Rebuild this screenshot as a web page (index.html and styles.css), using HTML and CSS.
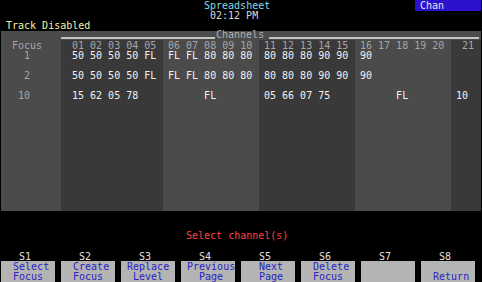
FILE: index.html
```html
<!DOCTYPE html>
<html lang="en">
<head>
    <meta charset="UTF-8">
    <title>Spreadsheet</title>
    <link rel="stylesheet" href="styles.css">
</head>
<body>
    <div class="screen">

        <!-- Top status lines -->
        <div class="line">
            <span class="title">Spreadsheet</span>
            <span class="mode">Chan</span>
        </div>
        <div class="line"><span class="clock">02:12 PM</span></div>
        <div class="line"><span class="status">Track Disabled</span></div>

        <!-- Channel sheet -->
        <div class="sheet">
            <div class="sheet-head"><span class="sheet-title">Channels</span></div>
            <div class="sheet-body">
                <div class="col focus-col">
                    <div class="cell head">Focus</div>
                    <div class="cell head">  1</div>
                    <div class="cell head skip">  2</div>
                    <div class="cell head skip"> 10</div>
                </div>
                <div class="col band dark g1">
                    <div class="cell head">01 02 03 04 05</div>
                    <div class="cell">50 50 50 50 FL</div>
                    <div class="cell skip">50 50 50 50 FL</div>
                    <div class="cell skip">15 62 05 78</div>
                </div>
                <div class="col band g2">
                    <div class="cell head">06 07 08 09 10</div>
                    <div class="cell">FL FL 80 80 80</div>
                    <div class="cell skip">FL FL 80 80 80</div>
                    <div class="cell skip">      FL</div>
                </div>
                <div class="col band dark g3">
                    <div class="cell head">11 12 13 14 15</div>
                    <div class="cell">80 80 80 90 90</div>
                    <div class="cell skip">80 80 80 90 90</div>
                    <div class="cell skip">05 66 07 75</div>
                </div>
                <div class="col band g4">
                    <div class="cell head">16 17 18 19 20</div>
                    <div class="cell">90</div>
                    <div class="cell skip">90</div>
                    <div class="cell skip">      FL</div>
                </div>
                <div class="col band dark g5">
                    <div class="cell head"> 21</div>
                    <div class="cell"></div>
                    <div class="cell skip"></div>
                    <div class="cell skip">10</div>
                </div>
            </div>
        </div>

        <div class="message">Select channel(s)</div>

        <!-- Soft keys -->
        <div class="softkeys">
            <div class="key"><div class="key-label">   S1</div><div class="key-face">  Select
  Focus</div></div>
            <div class="key"><div class="key-label">   S2</div><div class="key-face">  Create
  Focus</div></div>
            <div class="key"><div class="key-label">   S3</div><div class="key-face"> Replace
  Level</div></div>
            <div class="key"><div class="key-label">   S4</div><div class="key-face"> Previous
   Page</div></div>
            <div class="key"><div class="key-label">   S5</div><div class="key-face">   Next
   Page</div></div>
            <div class="key"><div class="key-label">   S6</div><div class="key-face">  Delete
  Focus</div></div>
            <div class="key"><div class="key-label">   S7</div><div class="key-face"></div></div>
            <div class="key"><div class="key-label">   S8</div><div class="key-face">
  Return</div></div>
        </div>
    </div>
</body>
</html>
```

FILE: styles.css
```css
* {
    margin: 0;
    padding: 0;
    box-sizing: border-box;
}

body {
    background: #000;
    color: #f2f2f2;
    font-family: "DejaVu Sans Mono", monospace;
    font-size: 10px;
    line-height: 10px;
}

.screen {
    width: 482px;
    height: 282px;
    padding-top: 1px;
    display: flex;
    flex-direction: column;
    overflow: hidden;
}

/* Top lines */
.line {
    height: 10px;
    display: flex;
    white-space: pre;
}

.title {
    margin-left: 204px;
    color: #86dce4;
}

.mode {
    margin-left: auto;
    margin-right: 1px;
    margin-top: -1px;
    width: 66px;
    height: 11px;
    padding: 1px 0 0 5px;
    background: #2c12cc;
    color: #e4e4ff;
}

.clock {
    margin-left: 210px;
    color: #d8d8d8;
}

.status {
    margin-left: 6px;
    color: #f4f4a8;
}

/* Sheet */
.sheet {
    margin-left: 1px;
    width: 480px;
    height: 180px;
    background: #4b4b4b;
    display: flex;
    flex-direction: column;
}

.sheet-head {
    height: 9px;
    display: flex;
    padding-left: 60px;
    padding-right: 2px;
}

.sheet-head::before,
.sheet-head::after {
    content: "";
    height: 2px;
    margin-top: 6px;
    background: #c4c4c4;
}

.sheet-head::before {
    width: 154px;
}

.sheet-head::after {
    flex: 1;
}

.sheet-title {
    width: 54px;
    padding-left: 1px;
    margin-top: -1px;
    color: #b2b2b2;
}

.sheet-body {
    flex: 1;
    display: flex;
}

.col {
    padding-top: 1px;
    padding-left: 5px;
}

.focus-col {
    width: 60px;
    padding-left: 11px;
}

.dark {
    background: #393939;
}

.g1 {
    width: 102px;
    padding-left: 11px;
}

.g2, .g3, .g4 {
    width: 96px;
}

.g5 {
    width: 30px;
}

.cell {
    height: 10px;
    white-space: pre;
}

.cell.skip {
    margin-top: 10px;
}

.head {
    color: #a6a6a6;
}

/* Prompt */
.message {
    margin-top: 20px;
    height: 10px;
    padding-left: 186px;
    color: #ff4040;
}

/* Soft keys */
.softkeys {
    margin-top: 11px;
    margin-left: 1px;
    display: flex;
    gap: 6px;
}

.key {
    width: 54px;
    display: flex;
    flex-direction: column;
}

.key-label {
    height: 9px;
    white-space: pre;
    color: #e2e2e2;
}

.key-face {
    height: 21px;
    padding-top: 1px;
    background: #b4b4b4;
    color: #2a1ec4;
    white-space: pre;
}
```
